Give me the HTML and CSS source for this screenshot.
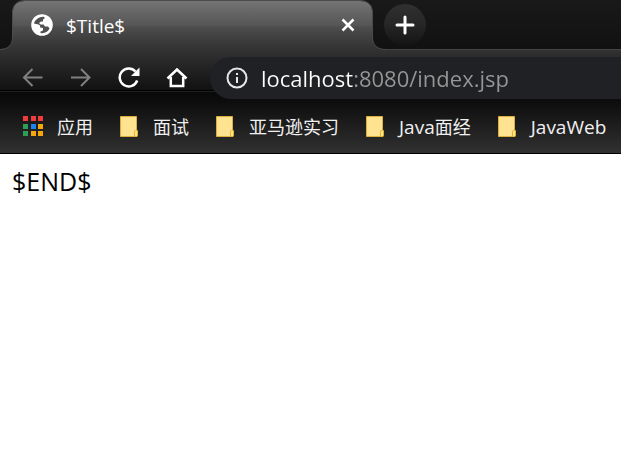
FILE: index.html
```
<!DOCTYPE html>
<html lang="zh-CN">
<head>
    <meta charset="UTF-8">
    <meta name="viewport" content="width=device-width, initial-scale=1.0">
    <title>$Title$</title>
    <link rel="stylesheet" href="styles.css">
</head>
<body>
    <header class="browser">
        <div class="tabs">
            <div class="tab">
                <svg class="tab-shape" viewBox="0 0 386 50" aria-hidden="true">
                    <defs>
                        <linearGradient id="tabFill" x1="0" y1="0" x2="0" y2="1">
                            <stop offset="0" stop-color="#747474"/>
                            <stop offset="0.5" stop-color="#555555"/>
                            <stop offset="0.53" stop-color="#4d4d4d"/>
                            <stop offset="1" stop-color="#313131"/>
                        </linearGradient>
                    </defs>
                    <path fill="url(#tabFill)" d="M0 50V49C8 49 12.500 45 12.500 37V13C12.500 5 17 1 25 1H360C368 1 372.500 5 372.500 13V37C372.500 45 377 49.500 386 49.500V50Z"/>
                    <path fill="none" stroke="#4b4b4b" d="M0 49.500C8 49.500 12.500 45 12.500 37V13C12.500 5 17 .5 25 .5H360C368 .5 372.500 5 372.500 13V37C372.500 45 377 49.500 386 49.500"/>
                </svg>
                <svg class="tab-icon" viewBox="0 0 22 22" aria-hidden="true">
                    <circle cx="11" cy="11" r="10.800" fill="#fff"/>
                    <path fill="#505050" d="M12 2.800C8 3 4 5.500 3 9.500L7.500 10.500C9 11 9.500 12 9 13.500L12 14V16.500L9.500 17.500V19C13 19.800 17 18 18.500 14.500L17 12.500H14L12.500 10.500H9.500L8 9L10 7.500H12V5.500L13.500 4.500V3Z"/>
                </svg>
                <span class="tab-title">$Title$</span>
                <button class="tab-close" type="button" aria-label="关闭">
                    <svg viewBox="0 0 14 14"><path d="M1.500 1.500L12.500 12.500M12.500 1.500L1.500 12.500"/></svg>
                </button>
            </div>
            <button class="new-tab" type="button" aria-label="新标签页">
                <svg viewBox="0 0 20 20"><path d="M10 2V18M2 10H18"/></svg>
            </button>
        </div>

        <div class="toolbar">
            <button class="tool" type="button" aria-label="后退" disabled>
                <svg viewBox="0 0 22 22"><path d="M20.500 10.500H2.500M10.500 2L2 10.500L10.500 19"/></svg>
            </button>
            <button class="tool" type="button" aria-label="前进" disabled>
                <svg viewBox="0 0 22 22"><path d="M1 10.500H19.500M11 2L19.500 10.500L11 19"/></svg>
            </button>
            <button class="tool" type="button" aria-label="刷新">
                <svg viewBox="0 0 22 22">
                    <path d="M19.200 13.500A9 9 0 1 1 17.500 4.500"/>
                    <path class="solid" d="M21.500 .5V9H13Z"/>
                </svg>
            </button>
            <button class="tool" type="button" aria-label="主页">
                <svg viewBox="0 0 22 22"><path d="M1.500 11.500L11 2.500L20.500 11.500M4.800 10V19H17.200V10"/></svg>
            </button>
            <label class="address">
                <svg viewBox="0 0 22 22" aria-hidden="true">
                    <circle cx="11" cy="11" r="9.500"/>
                    <path d="M11 10V16M11 6V8"/>
                </svg>
                <input class="url" type="text" value="localhost:8080/index.jsp" aria-label="地址" spellcheck="false">
            </label>
        </div>

        <nav class="bookmarks">
            <a class="bookmark" href="#">
                <svg viewBox="1 0 20 22" aria-hidden="true">
                    <path fill="#f03c3c" d="M0 0h5v5H0zM8 0h5v5H8zM15 0h5v5H15z"/>
                    <path fill="#2f9e55" d="M0 8h5v5H0zM0 15h5v5H0z"/>
                    <path fill="#1a84f5" d="M8 8h5v5H8z"/>
                    <path fill="#f5a60c" d="M15 8h5v5H15zM8 15h5v5H8zM15 15h5v5H15z"/>
                </svg>
                应用
            </a>
            <a class="bookmark" href="#">
                <svg viewBox="0 0 20 22" aria-hidden="true"><use href="#folder"/></svg>
                面试
            </a>
            <a class="bookmark" href="#">
                <svg viewBox="0 0 20 22" aria-hidden="true"><use href="#folder"/></svg>
                亚马逊实习
            </a>
            <a class="bookmark" href="#">
                <svg viewBox="0 0 20 22" aria-hidden="true"><use href="#folder"/></svg>
                <span><span class="latin">Java</span>面经</span>
            </a>
            <a class="bookmark" href="#">
                <svg viewBox="0 0 20 22" aria-hidden="true"><use href="#folder"/></svg>
                <span class="latin">JavaWeb</span>
            </a>
        </nav>
    </header>

    <main class="page">$END$</main>

    <!-- shared folder icon -->
    <svg class="symbols" aria-hidden="true">
        <symbol id="folder" viewBox="0 0 20 22">
            <path fill="#ffe391" stroke="#d9b03a" d="M.5 .5H16.500V20.500H.5Z"/>
            <path fill="#ffe391" stroke="#e3b52e" d="M14.500 20.500V15.500Q14.500 14.500 15.500 14.500H17.500V19.500Q17.500 20.500 16.500 20.500Z"/>
        </symbol>
    </svg>
</body>
</html>
```
FILE: styles.css
```
* {
    box-sizing: border-box;
}
body {
    margin: 0;
    background: #fff;
    color: #000;
    font-family: "Open Sans", "Noto Sans CJK SC", sans-serif;
}
button {
    padding: 0;
    border: none;
    background: none;
    display: flex;
    align-items: center;
    justify-content: center;
}
button svg,
.address svg {
    fill: none;
    stroke: #fff;
    stroke-width: 2.5;
}
.browser {
    background: linear-gradient(#323232 50px, #111 90px, #000 90px, #000 91px, #202020 91px, #202020 92px, #090909 92px, #0c0c0c 100px, #303030 152px);
    border-bottom: 1px solid #000;
    overflow: hidden;
}

/* tab strip */
.tabs {
    display: flex;
    height: 50px;
    background: linear-gradient(#191919, #111);
    border-bottom: 1px solid #444;
}
.tab {
    position: relative;
    display: flex;
    align-items: center;
    width: 384px;
    height: 50px;
    padding: 0 28px 0 31px;
    flex-shrink: 0;
}
.tab-shape {
    position: absolute;
    top: 0;
    left: 0;
    width: 386px;
    height: 50px;
}
.tab-icon {
    position: relative;
    width: 22px;
    height: 22px;
}
.tab-title {
    position: relative;
    flex: 1;
    margin-left: 13px;
    padding-top: 2px;
    color: #fff;
    font-size: 19px;
    line-height: 24px;
}
.tab-close {
    position: relative;
    width: 16px;
    height: 24px;
}
.tab-close svg {
    width: 14px;
    height: 14px;
}
.new-tab {
    width: 42px;
    height: 42px;
    margin-top: 4px;
    border-radius: 50%;
    background: linear-gradient(#303030, #262626 50%, #131313);
}
.new-tab svg {
    width: 20px;
    height: 20px;
    stroke-width: 3;
    stroke-linecap: round;
}

/* toolbar */
.toolbar {
    display: flex;
    align-items: center;
    padding: 7px 0 6px 9px;
}
.tool {
    width: 48px;
    height: 42px;
    flex-shrink: 0;
}
.tool svg {
    width: 22px;
    height: 22px;
}
.tool:disabled svg {
    stroke: #808080;
    stroke-width: 2;
}
.tool .solid {
    fill: #fff;
    stroke: none;
}
.address {
    display: flex;
    align-items: center;
    flex: 1;
    gap: 13px;
    height: 42px;
    margin-left: 9px;
    padding-left: 16px;
    border-radius: 21px 0 0 21px;
    background: #202124;
}
.address svg {
    width: 22px;
    height: 22px;
    flex-shrink: 0;
    stroke: #e8e8e8;
    stroke-width: 2;
}
/* host is white, the rest of the address is grey */
.url {
    flex: 1;
    min-width: 0;
    height: 42px;
    padding: 0;
    border: none;
    outline: none;
    background: linear-gradient(90deg, #fff 93px, #969696 93px);
    -webkit-background-clip: text;
    background-clip: text;
    color: transparent;
    font-family: inherit;
    font-size: 22px;
}

/* bookmarks */
.bookmarks {
    display: flex;
    gap: 27px;
    height: 48px;
    padding: 0 0 4px 24px;
}
.bookmark {
    display: flex;
    align-items: center;
    gap: 13px;
    flex-shrink: 0;
    color: #f0f0f0;
    font-size: 18px;
    line-height: 24px;
    text-decoration: none;
    white-space: nowrap;
}
.bookmark svg {
    width: 20px;
    height: 22px;
    overflow: visible;
}
.latin {
    font-size: 19px;
}

.page {
    padding: 11px 12px;
    font-size: 25px;
    line-height: 32px;
}
.symbols {
    position: absolute;
    width: 0;
    height: 0;
}
```
